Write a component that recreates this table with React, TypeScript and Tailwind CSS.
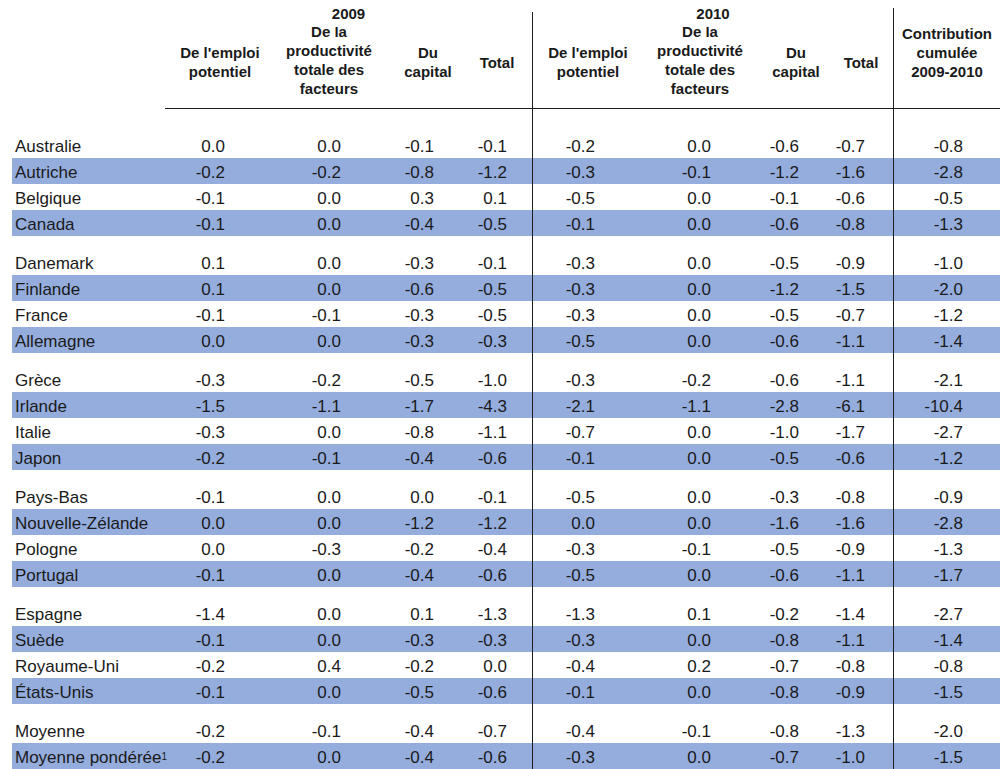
type Row = { name: string; sup?: boolean; v: string[] };

const groups: Row[][] = [
  [
    { name: 'Australie', v: ['0.0', '0.0', '-0.1', '-0.1', '-0.2', '0.0', '-0.6', '-0.7', '-0.8'] },
    { name: 'Autriche', v: ['-0.2', '-0.2', '-0.8', '-1.2', '-0.3', '-0.1', '-1.2', '-1.6', '-2.8'] },
    { name: 'Belgique', v: ['-0.1', '0.0', '0.3', '0.1', '-0.5', '0.0', '-0.1', '-0.6', '-0.5'] },
    { name: 'Canada', v: ['-0.1', '0.0', '-0.4', '-0.5', '-0.1', '0.0', '-0.6', '-0.8', '-1.3'] },
  ],
  [
    { name: 'Danemark', v: ['0.1', '0.0', '-0.3', '-0.1', '-0.3', '0.0', '-0.5', '-0.9', '-1.0'] },
    { name: 'Finlande', v: ['0.1', '0.0', '-0.6', '-0.5', '-0.3', '0.0', '-1.2', '-1.5', '-2.0'] },
    { name: 'France', v: ['-0.1', '-0.1', '-0.3', '-0.5', '-0.3', '0.0', '-0.5', '-0.7', '-1.2'] },
    { name: 'Allemagne', v: ['0.0', '0.0', '-0.3', '-0.3', '-0.5', '0.0', '-0.6', '-1.1', '-1.4'] },
  ],
  [
    { name: 'Grèce', v: ['-0.3', '-0.2', '-0.5', '-1.0', '-0.3', '-0.2', '-0.6', '-1.1', '-2.1'] },
    { name: 'Irlande', v: ['-1.5', '-1.1', '-1.7', '-4.3', '-2.1', '-1.1', '-2.8', '-6.1', '-10.4'] },
    { name: 'Italie', v: ['-0.3', '0.0', '-0.8', '-1.1', '-0.7', '0.0', '-1.0', '-1.7', '-2.7'] },
    { name: 'Japon', v: ['-0.2', '-0.1', '-0.4', '-0.6', '-0.1', '0.0', '-0.5', '-0.6', '-1.2'] },
  ],
  [
    { name: 'Pays-Bas', v: ['-0.1', '0.0', '0.0', '-0.1', '-0.5', '0.0', '-0.3', '-0.8', '-0.9'] },
    { name: 'Nouvelle-Zélande', v: ['0.0', '0.0', '-1.2', '-1.2', '0.0', '0.0', '-1.6', '-1.6', '-2.8'] },
    { name: 'Pologne', v: ['0.0', '-0.3', '-0.2', '-0.4', '-0.3', '-0.1', '-0.5', '-0.9', '-1.3'] },
    { name: 'Portugal', v: ['-0.1', '0.0', '-0.4', '-0.6', '-0.5', '0.0', '-0.6', '-1.1', '-1.7'] },
  ],
  [
    { name: 'Espagne', v: ['-1.4', '0.0', '0.1', '-1.3', '-1.3', '0.1', '-0.2', '-1.4', '-2.7'] },
    { name: 'Suède', v: ['-0.1', '0.0', '-0.3', '-0.3', '-0.3', '0.0', '-0.8', '-1.1', '-1.4'] },
    { name: 'Royaume-Uni', v: ['-0.2', '0.4', '-0.2', '0.0', '-0.4', '0.2', '-0.7', '-0.8', '-0.8'] },
    { name: 'États-Unis', v: ['-0.1', '0.0', '-0.5', '-0.6', '-0.1', '0.0', '-0.8', '-0.9', '-1.5'] },
  ],
  [
    { name: 'Moyenne', v: ['-0.2', '-0.1', '-0.4', '-0.7', '-0.4', '-0.1', '-0.8', '-1.3', '-2.0'] },
    { name: 'Moyenne pondérée', sup: true, v: ['-0.2', '0.0', '-0.4', '-0.6', '-0.3', '0.0', '-0.7', '-1.0', '-1.5'] },
  ],
];

// vertical rules run through the spacer rows too
function Gap({ h }: { h: string }) {
  return (
    <div className={`flex ml-3 ${h}`}>
      <div className="w-[521px] border-r border-[#1e1e1e]" />
      <div className="w-[361px] border-r border-[#1e1e1e]" />
    </div>
  );
}

function DataRow({ row, shaded }: { row: Row; shaded: boolean }) {
  const v = row.v;
  return (
    <div className={`flex ml-3 h-[26px] items-center pt-[3px] ${shaded ? 'bg-[#95addd]' : ''}`}>
      <div className="w-[155px] pl-[3px] whitespace-nowrap">
        {row.name}
        {row.sup && <sup className="text-[10px] relative -top-[3px]">1</sup>}
      </div>
      <div className="w-[58px] text-right">{v[0]}</div>
      <div className="w-[116px] text-right">{v[1]}</div>
      <div className="w-[93px] text-right">{v[2]}</div>
      <div className="w-[73px] text-right">{v[3]}</div>
      <div className="w-[26px] self-stretch -mt-[3px] border-r border-[#1e1e1e]" />
      <div className="w-[62px] text-right">{v[4]}</div>
      <div className="w-[116px] text-right">{v[5]}</div>
      <div className="w-[88px] text-right">{v[6]}</div>
      <div className="w-[66px] text-right">{v[7]}</div>
      <div className="w-[29px] self-stretch -mt-[3px] border-r border-[#1e1e1e]" />
      <div className="w-[69px] text-right">{v[8]}</div>
    </div>
  );
}

function HeadCell({ w, lines, tall }: { w: string; lines: string[]; tall?: boolean }) {
  return (
    <div className={`${w} flex flex-col items-center justify-center text-center ${tall ? 'pb-[4px]' : ''}`}>
      {lines.map((l) => (
        <div key={l} className="whitespace-nowrap">{l}</div>
      ))}
    </div>
  );
}

function YearBlock({ year, widths }: { year: string; widths: string[] }) {
  return (
    <div className="flex flex-col">
      <div className="h-[27px] flex items-center justify-center">{year}</div>
      <div className="h-[81px] flex overflow-hidden pb-[11px]">
        <HeadCell w={widths[0]} lines={["De l'emploi", 'potentiel']} />
        <HeadCell w={widths[1]} lines={['De la', 'productivité', 'totale des', 'facteurs']} tall />
        <HeadCell w={widths[2]} lines={['Du', 'capital']} />
        <HeadCell w={widths[3]} lines={['Total']} />
      </div>
    </div>
  );
}

export default function App() {
  return (
    <div className="w-[1000px] h-[769px] overflow-hidden bg-white text-[#1a1a1a] font-['Liberation_Sans',Arial,sans-serif]">
      {/* header */}
      <div className="ml-[165px] border-b border-[#1e1e1e] text-[15px] font-bold leading-[19px]">
        <div className="flex h-[108px]">
          <div className="w-[367px]">
            <YearBlock year="2009" widths={['w-[110px]', 'w-[108px]', 'w-[90px]', 'w-[48px]']} />
          </div>
          <div className="w-px mt-[12px] bg-[#1e1e1e]" />
          <div className="w-[360px]">
            <YearBlock year="2010" widths={['w-[110px]', 'w-[114px]', 'w-[78px]', 'w-[52px]']} />
          </div>
          <div className="w-px mt-[8px] bg-[#1e1e1e]" />
          <div className="flex-1 flex flex-col items-center justify-center text-center pt-[8px] pb-[11px]">
            <div>Contribution</div>
            <div>cumulée</div>
            <div>2009-2010</div>
          </div>
        </div>
      </div>

      <div className="text-[17px] leading-[20px]">
        <Gap h="h-[23px]" />
        {groups.map((g, gi) => (
          <div key={gi}>
            {gi > 0 && <Gap h="h-[13px]" />}
            {g.map((r, ri) => (
              <DataRow key={r.name} row={r} shaded={ri % 2 === 1} />
            ))}
          </div>
        ))}
      </div>
    </div>
  );
}
